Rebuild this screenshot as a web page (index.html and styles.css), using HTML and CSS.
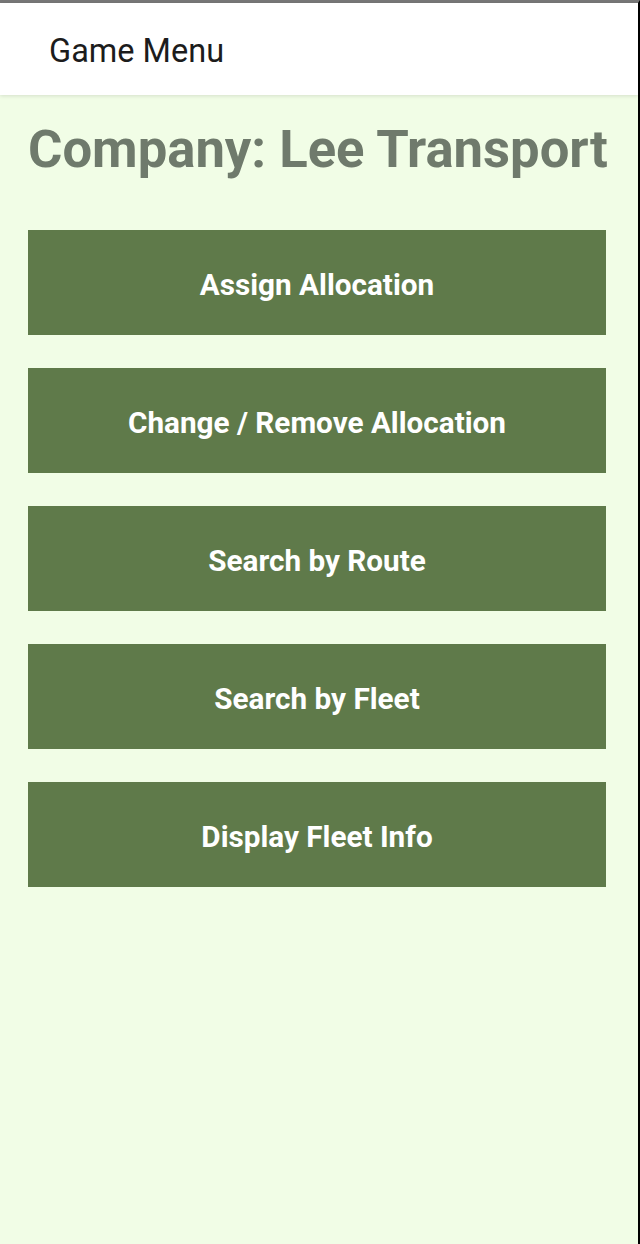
FILE: index.html
```html
<!DOCTYPE html>
<html>
<head>
<meta charset="utf-8">
<link rel="stylesheet" href="styles.css">
</head>
<body>
<div class="frame">
  <header class="appbar">
    <h1 class="appbar-title">Game Menu</h1>
  </header>
  <main class="content">
    <h2 class="company">Company: Lee Transport</h2>
    <nav class="menu">
      <button class="menu-btn">Assign Allocation</button>
      <button class="menu-btn">Change / Remove Allocation</button>
      <button class="menu-btn">Search by Route</button>
      <button class="menu-btn">Search by Fleet</button>
      <button class="menu-btn">Display Fleet Info</button>
    </nav>
  </main>
</div>
</body>
</html>
```
FILE: styles.css
```css
html, body {
  margin: 0;
  padding: 0;
  height: 100%;
}
body {
  font-family: Roboto, "Liberation Sans", sans-serif;
  background: #f1fde6;
}
.frame {
  box-sizing: border-box;
  height: 1244px;
  border-top: 3px solid #777777;
  border-right: 2px solid #000000;
  background: #f1fde6;
  display: flex;
  flex-direction: column;
}
.appbar {
  height: 92px;
  background: #ffffff;
  display: flex;
  align-items: center;
  padding-left: 49px;
  box-shadow: 0 1px 4px rgba(0,0,0,0.12);
  position: relative;
  z-index: 1;
}
.appbar-title {
  margin: 0;
  font-size: 32.5px;
  font-weight: 400;
  color: #1c1c1c;
  line-height: 40px;
  position: relative;
  top: 2px;
}
.content {
  padding: 0 32px 0 28px;
}
.company {
  margin: 23px 0 0 0;
  font-size: 52.6px;
  font-weight: 700;
  color: #6f7a6c;
  line-height: 62px;
  text-align: center;
  white-space: nowrap;
}
.menu {
  display: flex;
  flex-direction: column;
  gap: 33px;
  margin-top: 50px;
}
.menu-btn {
  height: 105px;
  border: none;
  background: #5f7a4a;
  color: #ffffff;
  font-family: Roboto, "Liberation Sans", sans-serif;
  font-weight: 700;
  font-size: 29.7px;
  padding: 3px 0 0 0;
}
```
